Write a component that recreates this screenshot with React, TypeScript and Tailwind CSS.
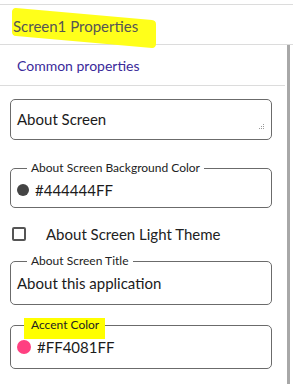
import { useState } from 'react';

const font = { fontFamily: 'Lato, "Open Sans", sans-serif' };

function OutlinedField({ label, children, highlight, tight }: { label: string; children: React.ReactNode; highlight?: boolean; tight?: boolean }) {
  return (
    <fieldset className={`border border-[#6b6b6b] rounded-[5px] px-[6px] pt-[4px] min-w-0 ${tight ? 'pb-[6px]' : 'pb-[10px]'}`}>
      <legend className="ml-[10px] px-[4px] text-[12px] leading-[14px] text-[#222]">
        <span className="relative">
          {highlight && <span className="absolute -left-[7px] -right-[6px] top-[1px] -bottom-[7px] bg-[#ffff00]" />}
          <span className="relative">{label}</span>
        </span>
      </legend>
      <div className="flex items-center gap-[6px] h-[22px] text-[15px] text-[#1b1b1b]">{children}</div>
    </fieldset>
  );
}

export default function App() {
  const [light, setLight] = useState(false);

  return (
    <div className="relative w-[293px] h-[384px] overflow-hidden bg-white" style={font}>
      <div className="h-[4px]" />
      <div className="border-t border-[#dcdcdc] h-[40px] flex items-center pl-[13px]">
        <span className="relative text-[#555] text-[15px] leading-[22px] mt-[2px]">
          <span className="absolute -left-[1px] -right-[18px] top-[-1px] bottom-[-5px] bg-[#ffff1a] skew-y-[5deg] rounded-sm" />
          <span className="relative">Screen1 Properties</span>
        </span>
      </div>
      <div className="flex border-t border-[#dcdcdc]">
        <div className="flex-1">
          <div className="h-[41px] flex items-center pl-[17px] border-b border-[#dcdcdc] text-[14px] text-[#3a2a9a]">
            Common properties
          </div>
          <div className="pl-[10px] pr-[13px] pt-[13px] flex flex-col">
            <div className="relative h-[41px] border border-[#6b6b6b] rounded-[5px] flex items-center px-[6px] text-[15px] text-[#1b1b1b]">
              About Screen
              <svg className="absolute right-[6px] bottom-[9px]" width="6" height="6" viewBox="0 0 6 6">
                <rect x="4" y="0" width="1" height="1" fill="#999" />
                <rect x="2" y="2" width="1" height="1" fill="#999" />
                <rect x="4" y="2" width="1" height="1" fill="#999" />
                <rect x="0" y="4" width="1" height="1" fill="#999" />
                <rect x="2" y="4" width="1" height="1" fill="#999" />
                <rect x="4" y="4" width="1" height="1" fill="#999" />
              </svg>
            </div>
            <div className="mt-[21px]">
              <OutlinedField label="About Screen Background Color" tight>
                <span className="w-[12px] h-[12px] rounded-full bg-[#444]" />
                <span>#444444FF</span>
              </OutlinedField>
            </div>
            <label className="mt-[18px] flex items-center h-[16px] pl-[2px] text-[15px] text-[#222]">
              <button
                onClick={() => setLight(!light)}
                className="w-[14px] h-[14px] border-2 border-[#555] rounded-[2px]"
              />
              <span className="ml-[20px]">About Screen Light Theme</span>
            </label>
            <div className="mt-[12px]">
              <OutlinedField label="About Screen Title">
                <span>About this application</span>
              </OutlinedField>
            </div>
            <div className="mt-[13px]">
              <OutlinedField label="Accent Color" highlight>
                <span className="w-[14px] h-[14px] rounded-full bg-[#ff4081]" />
                <span>#FF4081FF</span>
              </OutlinedField>
            </div>
          </div>
        </div>
        <div className="w-[8px] pl-[2px] pr-[3px] flex">
          <div className="w-[5px] h-[400px] bg-[#a8a8a8]" />
        </div>
      </div>
    </div>
  );
}
